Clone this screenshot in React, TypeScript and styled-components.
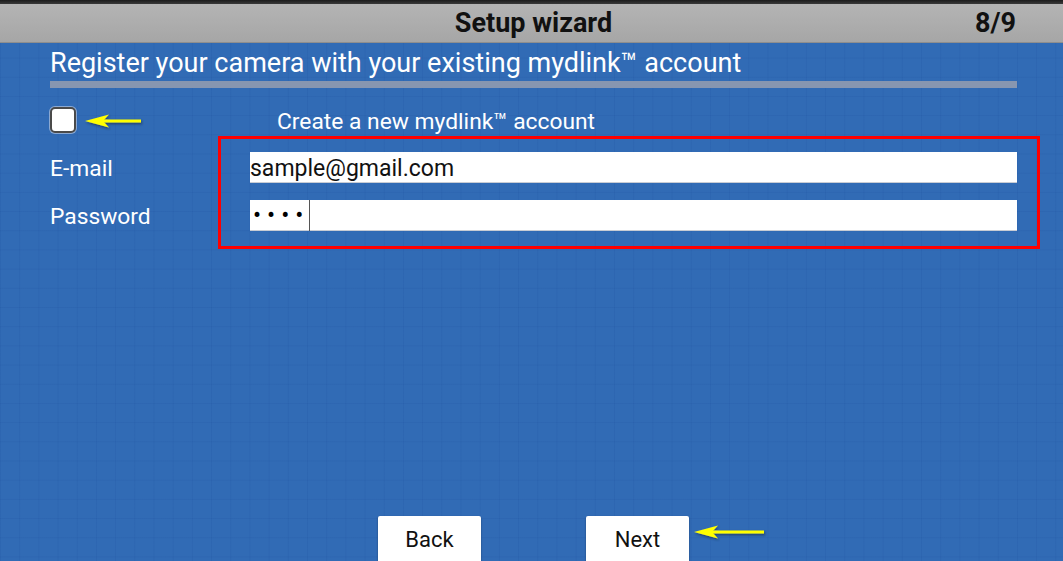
import React from "react";
import styled, { createGlobalStyle } from "styled-components";

const GlobalStyle = createGlobalStyle`
  html, body {
    margin: 0;
    padding: 0;
  }
  body {
    font-family: Roboto, "Noto Sans", sans-serif;
  }
`;

const Arrow = ({ width }: { width: number }) => (
  <svg width={width} height={20} viewBox={`0 0 ${width} 20`}>
    <defs>
      <filter id="arrowShadow" x="-10%" y="-50%" width="130%" height="200%">
        <feDropShadow dx="1" dy="1.5" stdDeviation="1" floodColor="#1a2a40" floodOpacity="0.7" />
      </filter>
    </defs>
    <g filter="url(#arrowShadow)" fill="#ffff00">
      <rect x={20} y={8.5} width={width - 24} height={3} />
      <path d="M2 10 L26 3.5 L20 10 L26 16.5 Z" />
    </g>
  </svg>
);

const App = () => {
  return (
    <>
      <GlobalStyle />
      <Screen>
        <TopStrip />
        <Header>
          <HeaderTitle>Setup wizard</HeaderTitle>
          <StepCount>8/9</StepCount>
        </Header>
        <Body>
          <Heading>Register your camera with your existing mydlink™ account</Heading>
          <Rule />
          <Form>
            <CheckRow>
              <Checkbox type="checkbox" />
              <CheckLabel>Create a new mydlink™ account</CheckLabel>
              <CheckArrow>
                <Arrow width={62} />
              </CheckArrow>
            </CheckRow>
            <Fields>
              <FieldRow>
                <Label>E-mail</Label>
                <Input defaultValue="sample@gmail.com" />
              </FieldRow>
              <FieldRow>
                <Label>Password</Label>
                <PasswordBox>
                  <Dots>••••</Dots>
                  <Caret />
                </PasswordBox>
              </FieldRow>
              <Highlight />
            </Fields>
          </Form>
          <Buttons>
            <Button>Back</Button>
            <NextWrap>
              <Button>Next</Button>
              <NextArrow>
                <Arrow width={76} />
              </NextArrow>
            </NextWrap>
          </Buttons>
        </Body>
      </Screen>
    </>
  );
};

export default App;

const Screen = styled.div`
  width: 1063px;
  height: 561px;
  overflow: hidden;
  display: flex;
  flex-direction: column;
  background-color: #316bb5;
  background-image: linear-gradient(to right, rgba(30, 80, 160, 0.18) 1px, transparent 1px),
    linear-gradient(to bottom, rgba(30, 80, 160, 0.18) 1px, transparent 1px);
  background-size: 19.2px 19.2px;
`;

const TopStrip = styled.div`
  height: 4px;
  background: linear-gradient(to bottom, #1c1c1c, #3a3a3a);
`;

const Header = styled.header`
  position: relative;
  height: 38px;
  display: flex;
  align-items: center;
  justify-content: center;
  background: linear-gradient(to bottom, #b4b4b4, #a6a6a6);
  border-bottom: 1px solid #8e8e8e;
`;

const HeaderTitle = styled.h1`
  margin: 0;
  font-size: 27px;
  font-weight: 700;
  color: #111;
  margin-left: 4px;
`;

const StepCount = styled.span`
  position: absolute;
  right: 47px;
  font-size: 27px;
  font-weight: 700;
  color: #111;
`;

const Body = styled.main`
  flex: 1;
  display: flex;
  flex-direction: column;
  padding: 5px 46px 0 50px;
`;

const Heading = styled.h2`
  margin: 0;
  font-size: 27px;
  font-weight: 400;
  color: #fff;
  line-height: 30px;
`;

const Rule = styled.div`
  height: 7px;
  margin-top: 3px;
  background: #8796b0;
`;

const Form = styled.section`
  display: flex;
  flex-direction: column;
  margin-top: 19px;
`;

const CheckRow = styled.div`
  position: relative;
  display: flex;
  align-items: center;
  height: 26px;
`;

const Checkbox = styled.input`
  appearance: none;
  margin: 0;
  width: 26px;
  height: 26px;
  box-sizing: border-box;
  background: #fff;
  border: 2px solid #4a4a4a;
  border-radius: 5px;
  box-shadow: 0 0 0 1px rgba(200, 210, 230, 0.6);
`;

const CheckLabel = styled.span`
  margin-left: 201px;
  margin-top: 2px;
  font-size: 22.8px;
  color: #fff;
`;

const CheckArrow = styled.div`
  position: absolute;
  left: 33px;
  top: 4px;
  line-height: 0;
`;

const Fields = styled.div`
  position: relative;
  display: flex;
  flex-direction: column;
  gap: 17px;
  margin-top: 19px;
`;

const FieldRow = styled.div`
  display: flex;
  align-items: center;
`;

const Label = styled.label`
  width: 200px;
  padding-top: 2px;
  font-size: 22.8px;
  color: #fff;
`;

const Input = styled.input`
  flex: 1;
  height: 31px;
  box-sizing: border-box;
  border: none;
  border-bottom: 1px solid #c8ccd4;
  padding: 2px 0 0;
  margin: 0;
  font-family: Roboto, sans-serif;
  font-size: 23px;
  color: #111;
  background: #fff;
  outline: none;
`;

const PasswordBox = styled.div`
  flex: 1;
  height: 31px;
  box-sizing: border-box;
  display: flex;
  align-items: center;
  background: #fff;
  border-bottom: 1px solid #c8ccd4;
`;

const Dots = styled.span`
  font-size: 24px;
  letter-spacing: 6px;
  color: #000;
  padding-left: 3px;
`;

const Caret = styled.span`
  width: 1px;
  height: 31px;
  background: #555;
`;

const Highlight = styled.div`
  position: absolute;
  left: 168px;
  right: -23px;
  top: -16px;
  bottom: -18px;
  border: 3px solid #ff0000;
  pointer-events: none;
`;

const Buttons = styled.footer`
  margin-top: auto;
  display: flex;
  justify-content: center;
  gap: 105px;
  transform: translateY(7px);
`;

const NextWrap = styled.div`
  position: relative;
`;

const Button = styled.button`
  width: 103px;
  height: 52px;
  box-sizing: border-box;
  padding: 0 0 5px;
  border: none;
  border-radius: 2px;
  background: #fff;
  box-shadow: 0 1px 2px rgba(0, 0, 0, 0.4);
  font-family: Roboto, sans-serif;
  font-size: 22px;
  color: #111;
`;

const NextArrow = styled.div`
  position: absolute;
  left: 106px;
  top: 6px;
  line-height: 0;
`;
